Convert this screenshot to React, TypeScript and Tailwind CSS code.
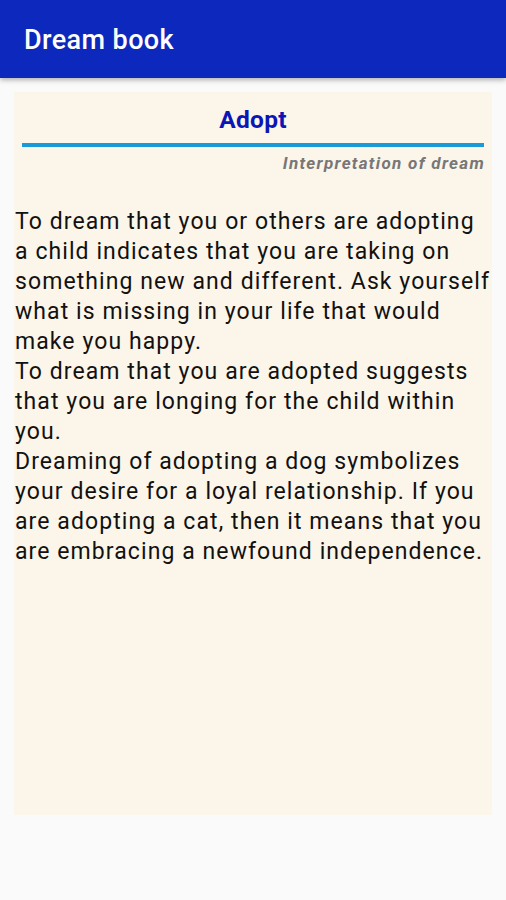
import React from "react";

export default function App() {
  return (
    <div
      className="w-[506px] h-[900px] bg-[#fafafa] flex flex-col"
      style={{ fontFamily: "Roboto, 'Noto Sans', sans-serif" }}
    >
      <div className="h-[78px] bg-[#0d28bd] flex items-center px-[24px] shadow-[0_2px_5px_rgba(0,0,0,0.3)] relative z-10">
        <span className="text-white text-[27px] font-medium tracking-[0.4px] mt-[2px]">Dream book</span>
      </div>
      <div className="mx-[14px] mt-[14px] h-[723px] bg-[#fcf5e9] flex flex-col">
        <div className="h-[51px] flex items-end justify-center pb-[11px]">
          <span className="text-[#0a17b6] text-[24.5px] font-bold leading-none tracking-[0.3px]">Adopt</span>
        </div>
        <div className="mx-[8px] h-[4px] bg-[#1a9ad6]" />
        <div className="mt-[2px] mr-[7px] text-right text-[#777] italic font-bold text-[17px] leading-[28px] tracking-[1.3px]">
          Interpretation of dream
        </div>
        <div className="mt-[30px] pl-[1px] text-[#111] text-[23px] leading-[30px] tracking-[1.08px]">
          To dream that you or others are adopting a child indicates that you are taking on something new and different. Ask yourself what is missing in your life that would make you happy.
          <br />
          To dream that you are adopted suggests that you are longing for the child within you.
          <br />
          Dreaming of adopting a dog symbolizes your desire for a loyal relationship. If you are adopting a cat, then it means that you are embracing a newfound independence.
        </div>
      </div>
    </div>
  );
}
